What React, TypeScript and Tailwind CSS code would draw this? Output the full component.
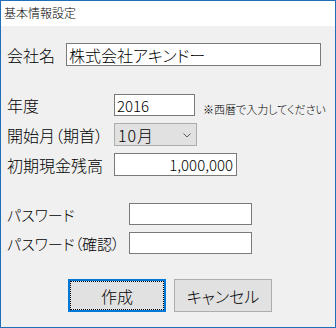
import React from "react";

const font = "[font-family:'Noto_Sans_CJK_JP','Noto_Sans',sans-serif] [font-feature-settings:'palt'] font-light";

function Field({ w, h, value, right }: { w: string; h: string; value: string; right?: boolean }) {
  return (
    <div
      className={`${w} ${h} bg-white border border-[#7a7a7a] flex items-center text-[15px] leading-none text-black ${
        right ? "justify-end pr-[3px]" : "pl-[2px]"
      }`}
    >
      {value}
    </div>
  );
}

export default function App() {
  return (
    <div className={`w-[336px] h-[328px] border border-[#1e6fb8] bg-[#f0f0f0] flex flex-col text-black ${font}`}>
      <div className="h-[25px] bg-white flex items-center pl-[3px] text-[12px] leading-none pb-[2px]">基本情報設定</div>
      <div className="flex flex-col pl-[6px]">
        <div className="mt-[17px] flex items-center">
          <div className="w-[59px] text-[16px] leading-none">会社名</div>
          <div className="w-[255px] h-[23px] bg-white border border-[#7a7a7a] flex items-center pl-[2px] text-[16px] leading-none">
            株式会社アキンドー
          </div>
        </div>
        <div className="mt-[28px] flex items-center">
          <div className="w-[107px] text-[16px] leading-none">年度</div>
          <Field w="w-[81px]" h="h-[22px]" value="2016" />
          <div className="ml-[8px] self-end mb-[1px] text-[11px] leading-none">※西暦で入力してください</div>
        </div>
        <div className="mt-[7px] flex items-center">
          <div className="w-[107px] text-[16px] leading-none">開始月（期首）</div>
          <div className="w-[83px] h-[23px] bg-[#e1e1e1] border border-[#adadad] flex items-center justify-between pl-[3px] pr-[5px] text-[16px] leading-none">
            <span className="tracking-[1px]">10月</span>
            <svg width="8" height="5" viewBox="0 0 8 5" className="mt-[1px]">
              <path d="M0.5 0.5 L4 4 L7.5 0.5" fill="none" stroke="#5a5a5a" strokeWidth="1" />
            </svg>
          </div>
        </div>
        <div className="mt-[7px] flex items-center">
          <div className="w-[107px] text-[16px] leading-none">初期現金残高</div>
          <Field w="w-[123px]" h="h-[23px]" value="1,000,000" right />
        </div>
        <div className="mt-[27px] flex items-center">
          <div className="w-[122px] text-[15px] leading-none">パスワード</div>
          <div className="w-[123px] h-[22px] bg-white border border-[#7a7a7a]" />
        </div>
        <div className="mt-[7px] flex items-center">
          <div className="w-[122px] text-[15px] leading-none">パスワード（確認）</div>
          <div className="w-[123px] h-[22px] bg-white border border-[#7a7a7a]" />
        </div>
        <div className="mt-[25px] flex items-center gap-[8px] pl-[61px]">
          <div className="w-[98px] h-[33px] bg-[#e1e1e1] border-2 border-[#0078d7] outline-1 outline-dotted outline-black -outline-offset-3 flex items-center justify-center text-[16px] leading-none">
            作成
          </div>
          <div className="w-[98px] h-[33px] bg-[#e1e1e1] border border-[#adadad] flex items-center justify-center text-[16px] leading-none">
            キャンセル
          </div>
        </div>
      </div>
    </div>
  );
}
